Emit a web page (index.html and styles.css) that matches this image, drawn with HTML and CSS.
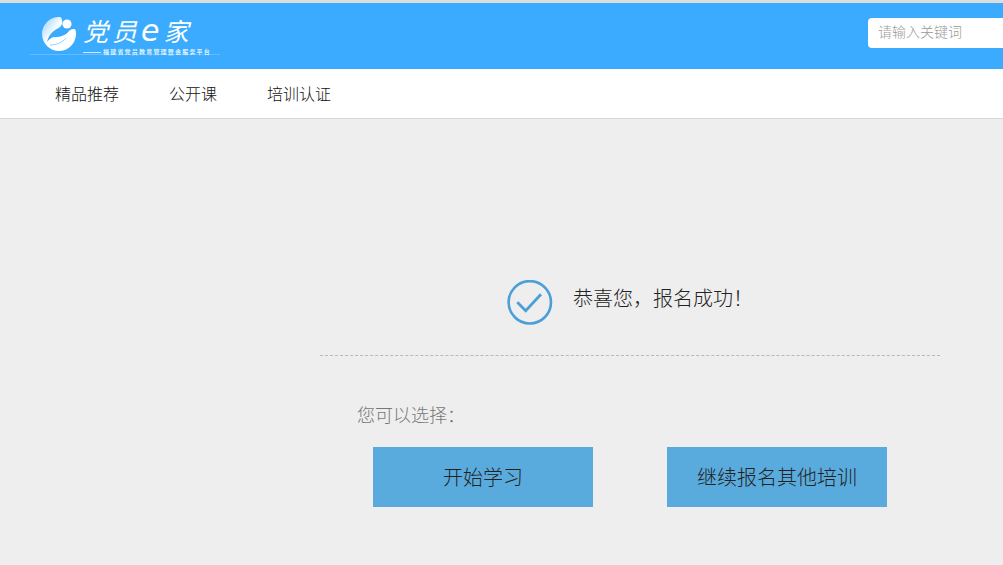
FILE: index.html
```html
<!DOCTYPE html>
<html lang="zh-CN">
<head>
<meta charset="utf-8">
<title>报名成功</title>
<link rel="stylesheet" href="styles.css">
</head>
<body>
<header class="top">
  <div class="logo">
    <svg class="logo-mark" width="36" height="36" viewBox="0 0 36 36">
      <defs><linearGradient id="g" x1="0" y1="0.1" x2="0.8" y2="0.7"><stop offset="0" stop-color="#9ed4ff"/><stop offset="0.5" stop-color="#fff"/></linearGradient></defs>
      <circle cx="18" cy="18" r="17" fill="url(#g)"/>
      <path d="M6 26C8 17 14 14 19 11C22 8 22 4 19 0L36 0L36 14C32 12 30 13 28 15C25 19 20 21 14 21C11 21 8 23 6 26Z" fill="#3aabff"/>
      <path d="M9 29C15 29 21 27 25 22" fill="none" stroke="#8fd0ff" stroke-width="1"/>
      <circle cx="26" cy="8" r="4.6" fill="#fff"/>
    </svg>
    <div class="logo-words">
      <div class="logo-title">党员<span class="logo-e">e</span>家</div>
      <div class="logo-sub"><span class="logo-dash"></span>福建省党员教育管理暨会服务平台</div>
    </div>
  </div>
  <div class="search">请输入关键词</div>
</header>
<nav class="nav">
  <a class="nav-item">精品推荐</a>
  <a class="nav-item">公开课</a>
  <a class="nav-item">培训认证</a>
</nav>
<main class="panel">
  <div class="result">
    <svg class="check" width="46" height="46" viewBox="0 0 46 46">
      <circle cx="22.8" cy="22.3" r="21.2" fill="none" stroke="#4a9fd8" stroke-width="2.6"/>
      <path d="M10.3 22.3L18.7 30.7L34 14.3" fill="none" stroke="#4a9fd8" stroke-width="2.8"/>
    </svg>
    <p class="result-text">恭喜您&#xFF0C;报名成功&#xFF01;</p>
  </div>
  <div class="choices">
    <p class="hint">您可以选择&#xFF1A;</p>
    <div class="actions">
      <a class="btn">开始学习</a>
      <a class="btn">继续报名其他培训</a>
    </div>
  </div>
</main>
</body>
</html>
```
FILE: styles.css
```css
html, body {
  margin: 0;
  height: 100%;
  overflow: hidden;
}
body {
  background: #eeeeee;
  font-family: "Noto Sans CJK SC", "Liberation Sans", sans-serif;
  font-weight: 300;
  border-top: 3px solid #dcdddd;
  box-sizing: border-box;
}
.top {
  height: 66px;
  background: #3aabff;
  display: flex;
  justify-content: space-between;
  align-items: flex-start;
}
.logo {
  display: flex;
  align-items: flex-start;
  box-sizing: border-box;
  width: 190px;
  height: 39px;
  margin: 13px 0 0 30px;
  padding-left: 11px;
  border-bottom: 1px solid #63bdff;
}
.logo-words { margin-left: 6px; }
.logo-title {
  color: #fff;
  font-size: 25px;
  line-height: 28px;
  font-style: italic;
  letter-spacing: 4px;
  font-weight: 400;
  white-space: nowrap;
}
.logo-e {
  font-family: "DejaVu Sans", sans-serif;
  font-size: 30px;
  line-height: 20px;
}
.logo-sub {
  display: flex;
  align-items: center;
  color: #dff1ff;
  font-size: 6px;
  line-height: 8px;
  margin-top: 4px;
  white-space: nowrap;
  letter-spacing: 1.2px;
  font-weight: 700;
}
.logo-dash {
  display: block;
  flex: none;
  width: 18px;
  height: 1px;
  background: #cfeaff;
  margin-right: 2px;
}
.search {
  flex: none;
  width: 135px;
  height: 30px;
  margin-top: 15px;
  box-sizing: border-box;
  background: #fff;
  border-radius: 4px 0 0 4px;
  padding-left: 10px;
  color: #999;
  font-size: 14px;
  line-height: 27px;
}
.nav {
  height: 49px;
  background: #fff;
  border-bottom: 1px solid #d8d8d8;
  display: flex;
  gap: 50px;
  padding-left: 55px;
}
.nav-item {
  color: #111;
  font-size: 16px;
  line-height: 48px;
}
.panel {
  width: 620px;
  margin-left: 320px;
}
.result {
  display: flex;
  align-items: flex-start;
  padding-top: 161px;
  padding-left: 187px;
  height: 75px;
  border-bottom: 1px dashed #b8b8b8;
}
.check { flex: none; }
.result-text {
  margin: 0 0 0 20px;
  color: #222;
  font-size: 20px;
  line-height: 35px;
}
.choices { padding-top: 46px; }
.hint {
  margin: 0 0 0 37px;
  color: #777;
  font-size: 18px;
  line-height: 24px;
}
.actions {
  display: flex;
  gap: 74px;
  margin-top: 21px;
  padding-left: 53px;
}
.btn {
  width: 220px;
  height: 60px;
  background: #5aabdd;
  color: #222;
  font-size: 20px;
  line-height: 60px;
  text-align: center;
}
```
